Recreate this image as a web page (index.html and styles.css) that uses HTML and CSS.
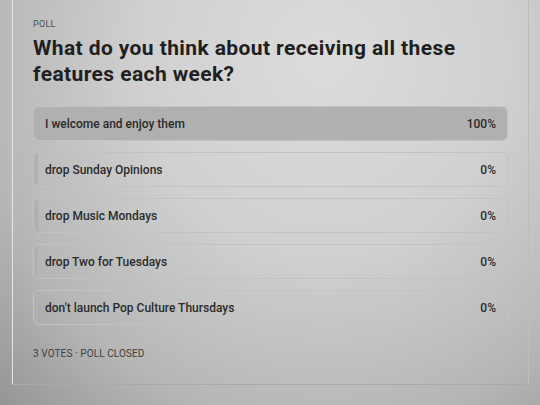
FILE: index.html
```html
<!DOCTYPE html>
<html lang="en">
<head>
    <meta charset="UTF-8">
    <title>Poll</title>
    <link rel="stylesheet" href="styles.css">
</head>
<body>
    <div class="card">
        <div class="label">POLL</div>
        <h1 class="question">What do you think about receiving all these features each week?</h1>

        <div class="options">
            <div class="option">
                <div class="fill" style="width: 100%"></div>
                <span class="text">I welcome and enjoy them</span>
                <span class="pct">100%</span>
            </div>
            <div class="option">
                <div class="fill" style="width: 0%"></div>
                <span class="text">drop Sunday Opinions</span>
                <span class="pct">0%</span>
            </div>
            <div class="option">
                <div class="fill" style="width: 0%"></div>
                <span class="text">drop Music Mondays</span>
                <span class="pct">0%</span>
            </div>
            <div class="option">
                <div class="fill" style="width: 0%"></div>
                <span class="text">drop Two for Tuesdays</span>
                <span class="pct">0%</span>
            </div>
            <div class="option">
                <div class="fill" style="width: 0%"></div>
                <span class="text">don't launch Pop Culture Thursdays</span>
                <span class="pct">0%</span>
            </div>
        </div>

        <div class="footer">3 VOTES · POLL CLOSED</div>
    </div>
</body>
</html>
```

FILE: styles.css
```css
html, body {
    height: 100%;
}

body {
    margin: 0;
    font-family: Roboto, "Noto Sans", sans-serif;
    color: #2b2b2b;
    background: radial-gradient(ellipse at 60% 15%, #dcdcdc 0%, #d0d0d0 40%, #b6b6b6 75%, #959595 100%);
    overflow: hidden;
}

.card {
    margin: 0 11px 0 12px;
    height: 385px;
    box-sizing: border-box;
    border-left: 1px solid #e6e6e6;
    border-right: 1px solid #bdbdbd;
    border-bottom: 1px solid #a9a9a9;
    padding: 19px 20px 0 20px;
}

.label {
    font-size: 9px;
    color: #4d4d4d;
    letter-spacing: 0.3px;
}

.question {
    margin: 6px 0 19px 0;
    max-width: 475px;
    font-size: 21px;
    line-height: 26px;
    letter-spacing: 0.4px;
    font-weight: 700;
    color: #1f1f1f;
}

.options {
    display: flex;
    flex-direction: column;
    gap: 11px;
    width: 475px;
}

.option {
    position: relative;
    display: flex;
    align-items: center;
    justify-content: space-between;
    height: 35px;
    box-sizing: border-box;
    padding: 0 11px 0 11px;
    border: 1px solid #c2c2c2;
    border-radius: 6px;
    overflow: hidden;
    font-size: 12px;
    font-weight: 500;
}

.fill {
    position: absolute;
    top: 0;
    left: 0;
    bottom: 0;
    min-width: 4px;
    background-color: #b0b0b0;
}

.text, .pct {
    position: relative;
}

.footer {
    margin-top: 23px;
    font-size: 10px;
    letter-spacing: 0.1px;
    color: #3e3e3e;
}
```
